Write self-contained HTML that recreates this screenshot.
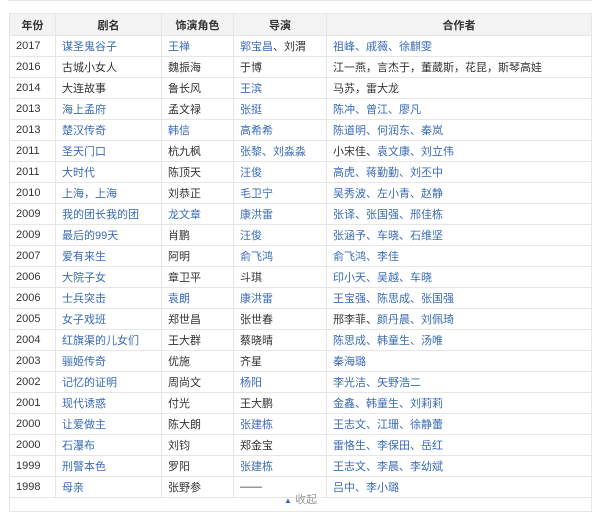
<!DOCTYPE html>
<html><head><meta charset="utf-8"><style>
body{margin:0;background:#fff;font-family:"Liberation Sans","Noto Sans CJK SC",sans-serif;font-size:11px;color:#333;width:600px;height:503px;overflow:hidden;position:relative}
.top{position:absolute;left:8px;top:0;width:584px;height:1px;background:#e8e8e8}
table{position:absolute;left:9px;top:13px;border-collapse:collapse;width:583px;table-layout:fixed}
td,th{border:1px solid #e6e6e6;height:20px;padding:0 0 0 6px;text-align:left;white-space:nowrap;overflow:hidden;font-weight:normal}
th{background:#f3f3f3;font-weight:bold;text-align:center;padding:0;height:21px;color:#333}
a{color:#3a6bb5;text-decoration:none}
.fold{position:absolute;left:9px;top:491px;width:581px;height:20px;border:1px solid #e6e6e6;border-top:none;text-align:center;color:#999;font-size:11px;line-height:18px}
</style></head><body>
<div class="top"></div>
<table>
<colgroup><col style="width:46px"><col style="width:106px"><col style="width:72px"><col style="width:93px"><col></colgroup>
<tr><th>年份</th><th>剧名</th><th>饰演角色</th><th>导演</th><th>合作者</th></tr>
<tr><td>2017</td><td><a>谋圣鬼谷子</a></td><td><a>王禅</a></td><td><a>郭宝昌</a>、刘渭</td><td><a>祖峰、戚薇、徐麒雯</a></td></tr>
<tr><td>2016</td><td>古城小女人</td><td>魏振海</td><td>于博</td><td>江一燕，言杰于，董葳斯，花昆，斯琴高娃</td></tr>
<tr><td>2014</td><td>大连故事</td><td>鲁长风</td><td><a>王滨</a></td><td>马苏，雷大龙</td></tr>
<tr><td>2013</td><td><a>海上孟府</a></td><td>孟文禄</td><td><a>张挺</a></td><td><a>陈冲、曾江、廖凡</a></td></tr>
<tr><td>2013</td><td><a>楚汉传奇</a></td><td><a>韩信</a></td><td><a>高希希</a></td><td><a>陈道明、何润东、秦岚</a></td></tr>
<tr><td>2011</td><td><a>圣天门口</a></td><td>杭九枫</td><td><a>张黎、刘淼淼</a></td><td>小宋佳、<a>袁文康、刘立伟</a></td></tr>
<tr><td>2011</td><td><a>大时代</a></td><td>陈顶天</td><td><a>汪俊</a></td><td><a>高虎、蒋勤勤、刘丕中</a></td></tr>
<tr><td>2010</td><td><a>上海，上海</a></td><td>刘恭正</td><td><a>毛卫宁</a></td><td><a>吴秀波、左小青、赵静</a></td></tr>
<tr><td>2009</td><td><a>我的团长我的团</a></td><td><a>龙文章</a></td><td><a>康洪雷</a></td><td><a>张译、张国强、邢佳栋</a></td></tr>
<tr><td>2009</td><td><a>最后的99天</a></td><td>肖鹏</td><td><a>汪俊</a></td><td><a>张涵予、车晓、石维坚</a></td></tr>
<tr><td>2007</td><td><a>爱有来生</a></td><td>阿明</td><td><a>俞飞鸿</a></td><td><a>俞飞鸿、李佳</a></td></tr>
<tr><td>2006</td><td><a>大院子女</a></td><td>章卫平</td><td>斗琪</td><td><a>印小天、吴越、车晓</a></td></tr>
<tr><td>2006</td><td><a>士兵突击</a></td><td><a>袁朗</a></td><td><a>康洪雷</a></td><td><a>王宝强、陈思成、张国强</a></td></tr>
<tr><td>2005</td><td><a>女子戏班</a></td><td>郑世昌</td><td>张世春</td><td>邢李菲、<a>颜丹晨、刘佩琦</a></td></tr>
<tr><td>2004</td><td><a>红旗渠的儿女们</a></td><td>王大群</td><td>蔡晓晴</td><td><a>陈思成、韩童生、汤唯</a></td></tr>
<tr><td>2003</td><td><a>骊姬传奇</a></td><td>优施</td><td>齐星</td><td><a>秦海璐</a></td></tr>
<tr><td>2002</td><td><a>记忆的证明</a></td><td>周尚文</td><td><a>杨阳</a></td><td><a>李光洁、矢野浩二</a></td></tr>
<tr><td>2001</td><td><a>现代诱惑</a></td><td>付光</td><td>王大鹏</td><td><a>金鑫、韩童生、刘莉莉</a></td></tr>
<tr><td>2000</td><td><a>让爱做主</a></td><td>陈大朗</td><td><a>张建栋</a></td><td><a>王志文、江珊、徐静蕾</a></td></tr>
<tr><td>2000</td><td><a>石瀑布</a></td><td>刘钧</td><td>郑金宝</td><td><a>雷恪生、李保田、岳红</a></td></tr>
<tr><td>1999</td><td><a>刑警本色</a></td><td>罗阳</td><td><a>张建栋</a></td><td><a>王志文、李晨、李幼斌</a></td></tr>
<tr><td>1998</td><td><a>母亲</a></td><td>张野参</td><td>——</td><td><a>吕中、李小璐</a></td></tr>
</table>
<div class="fold"><span style="color:#3a6bb5;font-size:8px">▲</span> 收起</div>
</body></html>
